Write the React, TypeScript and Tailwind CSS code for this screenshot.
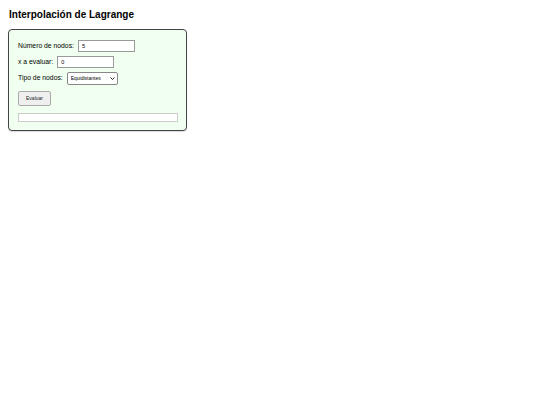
import * as React from 'react';

const App: React.FC = () => {
  const [n, setN] = React.useState('5');
  const [x, setX] = React.useState('0');
  const [tipo, setTipo] = React.useState('equi');

  return (
    <div className="min-h-screen bg-white px-[9px] pt-[9px] text-black" style={{ fontFamily: '"Liberation Sans", Arial, sans-serif' }}>
      <h1 className="text-[10px] font-bold leading-[12px]">Interpolación de Lagrange</h1>
      <div className="-ml-[1px] mt-[8px] w-[179px] rounded-[4px] border border-[#444] bg-[#f0fff0] px-[9px] pt-[10px] pb-[8px] shadow-[0_1px_1px_rgba(0,0,0,0.15)]">
        <div className="flex h-[12px] items-center text-[6.8px]">
          <label className="mr-[4px]">Número de nodos:</label>
          <input
            value={n}
            onChange={(e) => setN(e.target.value)}
            className="h-[12px] w-[57px] border border-[#999] bg-white px-[3px] text-[5.5px] outline-none"
          />
        </div>
        <div className="mt-[4px] flex h-[12px] items-center text-[6.8px]">
          <label className="mr-[4px]">x a evaluar:</label>
          <input
            value={x}
            onChange={(e) => setX(e.target.value)}
            className="h-[12px] w-[57px] border border-[#999] bg-white px-[3px] text-[5.5px] outline-none"
          />
        </div>
        <div className="mt-[4px] flex h-[13px] items-center text-[6.8px]">
          <label className="mr-[4px]">Tipo de nodos:</label>
          <div className="relative h-[13px] w-[51px]">
            <select
              value={tipo}
              onChange={(e) => setTipo(e.target.value)}
              className="h-[13px] w-[51px] appearance-none rounded-[2px] border border-[#888] bg-white pl-[3px] text-[5px] outline-none"
            >
              <option value="equi">Equidistantes</option>
              <option value="cheb">Chebyshev</option>
            </select>
            <svg className="pointer-events-none absolute right-[3px] top-[5px] h-[3px] w-[5px]" viewBox="0 0 10 6" fill="none" stroke="#222" strokeWidth="2">
              <path d="M1 1l4 4 4-4" />
            </svg>
          </div>
        </div>
        <button className="mt-[6px] flex h-[15px] w-[33px] items-center justify-center rounded-[2px] border border-[#aaa] bg-[#efefef] text-[5px] text-[#222]">
          Evaluar
        </button>
        <div className="mt-[7px] h-[9px] w-[160px] border border-[#ccc] bg-white" />
      </div>
    </div>
  );
};

export default App;
